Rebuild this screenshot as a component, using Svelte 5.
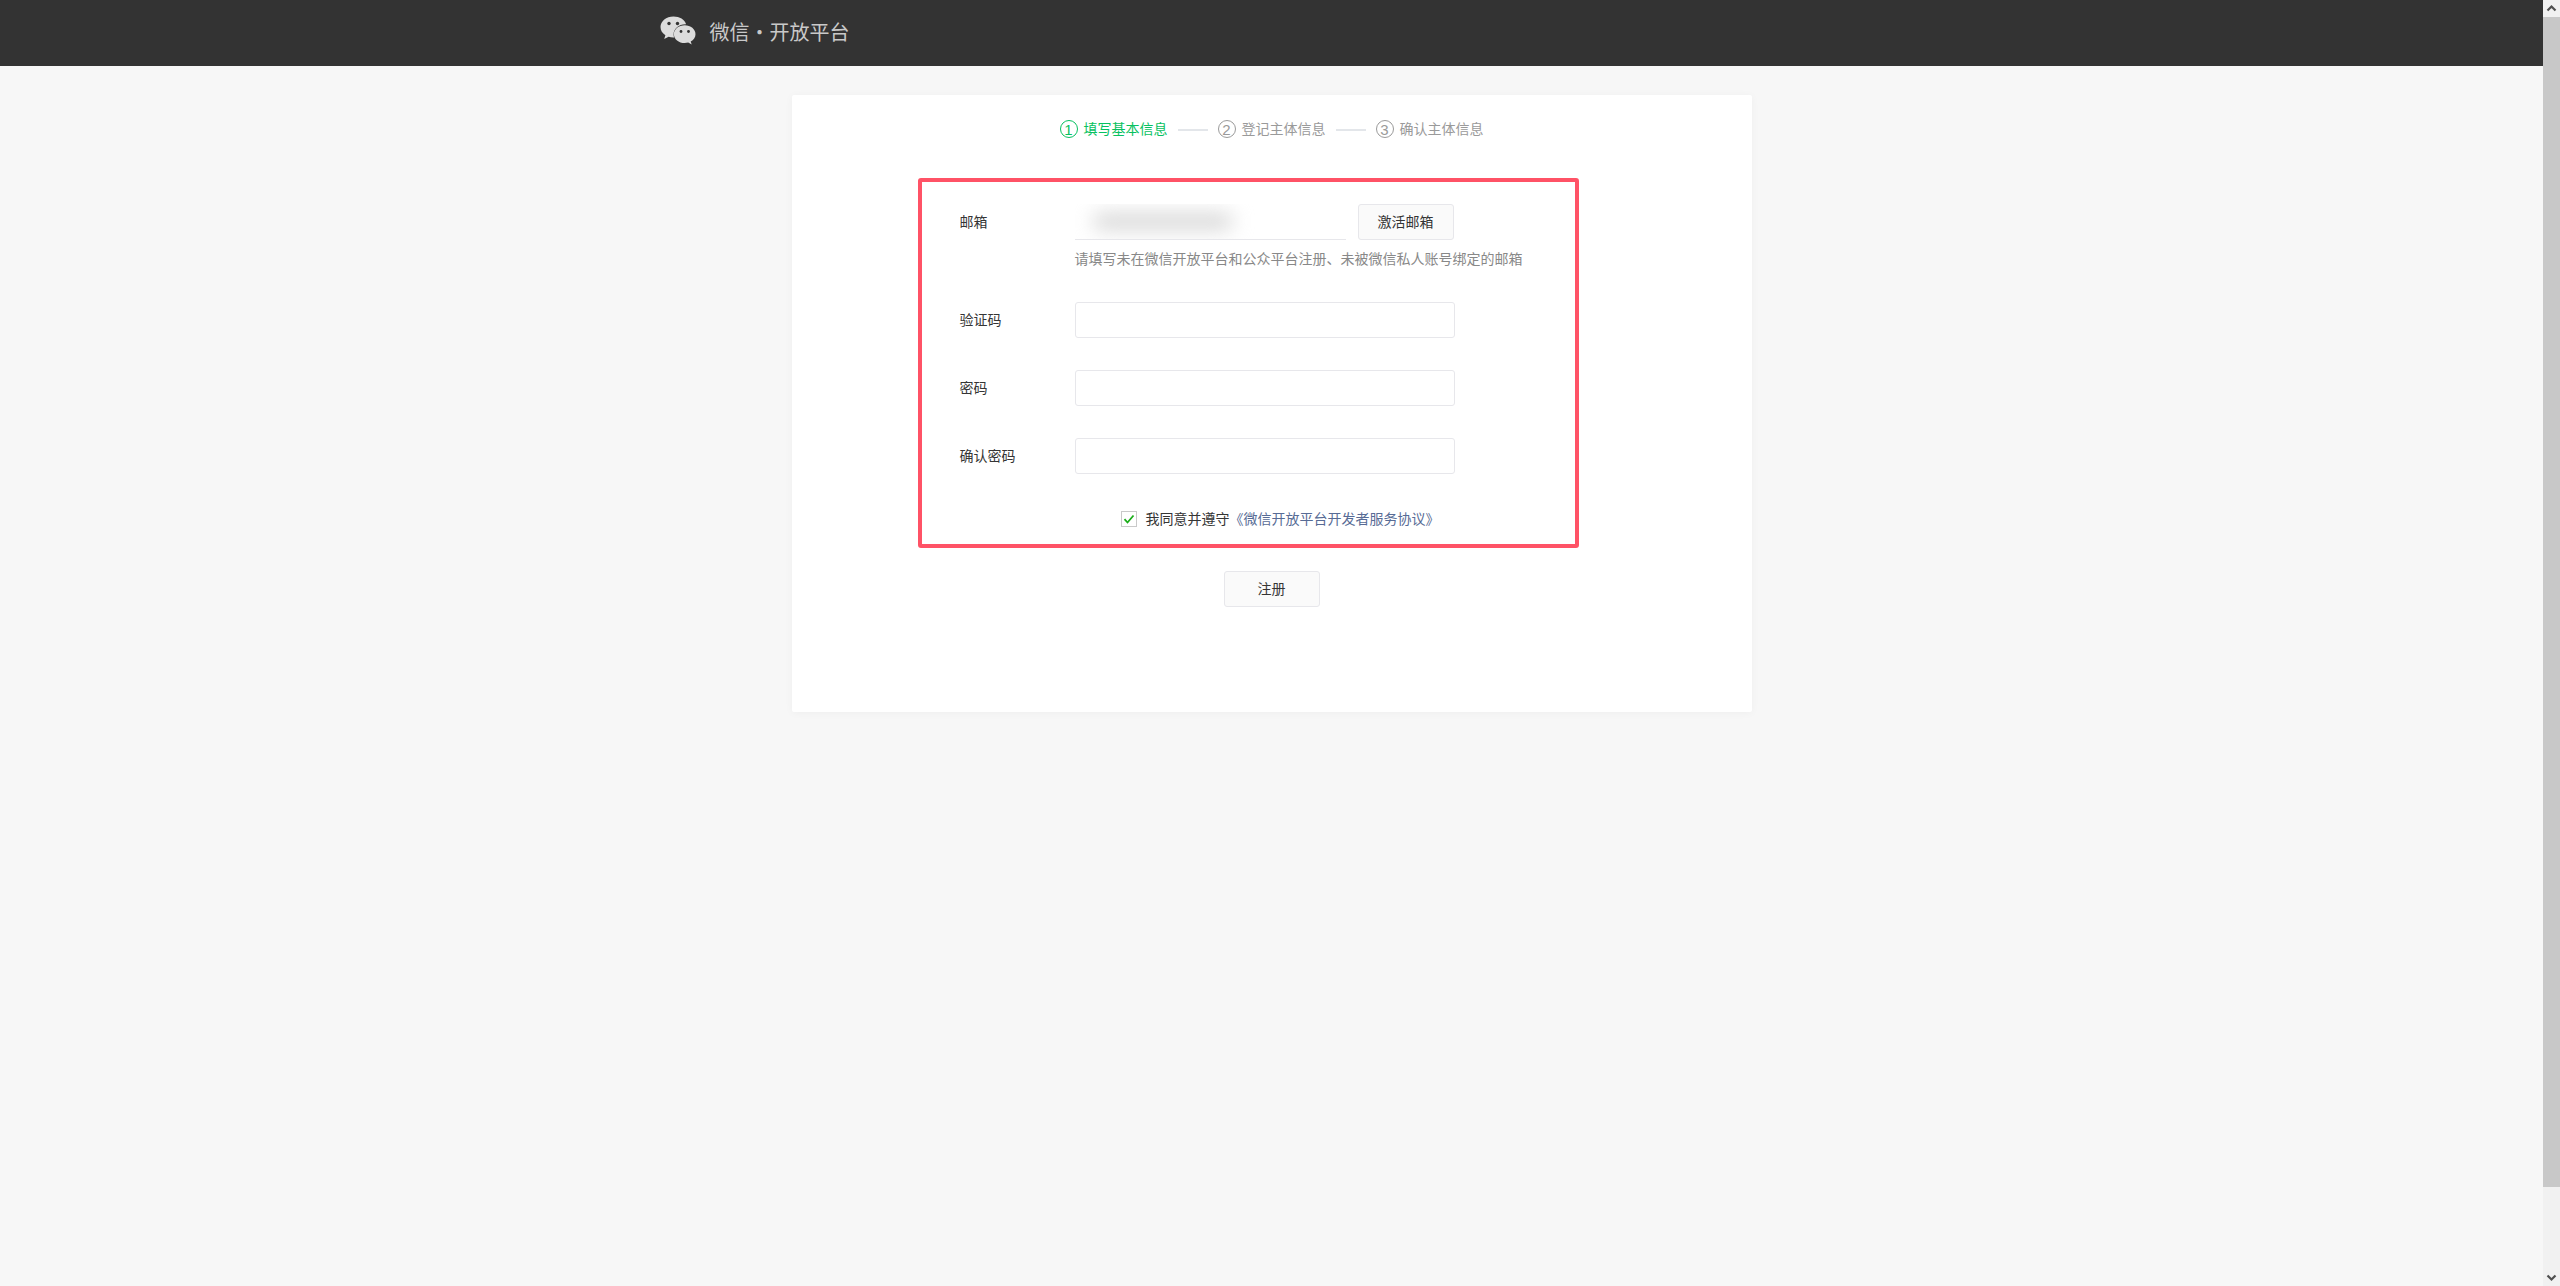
<script lang="ts">
  const steps = [
    { num: 1, label: '填写基本信息', active: true },
    { num: 2, label: '登记主体信息', active: false },
    { num: 3, label: '确认主体信息', active: false }
  ];
  const fields = ['验证码', '密码', '确认密码'];
</script>

<div class="page">
  <div class="main">
    <header class="topbar">
      <div class="topbar-inner">
        <svg class="logo" viewBox="0 0 36 30" width="36" height="30" aria-hidden="true">
          <path class="bubble" d="M13.5 0.5C6.3 0.5 0.5 5.2 0.5 11c0 3.4 1.9 6.3 4.9 8.2L4.2 23l4.4-2.3c1.5.4 3 .7 4.6.7h.9c-.3-1-.5-2-.5-3 0-5.700 5.200-10.200 11.700-10.200h.8C24.700 3.600 19.600.5 13.500.5z" />
          <path class="bubble" d="M35.500 18.200c0-4.900-4.800-8.900-10.800-8.900s-10.800 4-10.800 8.900 4.800 8.900 10.800 8.900c1.200 0 2.400-.2 3.500-.5l3.500 2-1-3.100c2.900-1.700 4.800-4.200 4.800-7.300z" />
          <circle cx="9" cy="7.500" r="1.700" fill="#333" />
          <circle cx="17.500" cy="7.500" r="1.700" fill="#333" />
          <circle cx="21" cy="15.500" r="1.400" fill="#333" />
          <circle cx="28.500" cy="15.500" r="1.400" fill="#333" />
        </svg>
        <span class="brand">微信・开放平台</span>
      </div>
    </header>

    <section class="card">
      <ol class="steps">
        {#each steps as step, i}
          {#if i > 0}<li class="dash"></li>{/if}
          <li class="step" class:active={step.active}>
            <span class="num">{step.num}</span>
            <span class="step-label">{step.label}</span>
          </li>
        {/each}
      </ol>

      <form class="form" onsubmit={(e) => e.preventDefault()}>
        <div class="highlight"></div>

        <div class="row email-row">
          <span class="label">邮箱</span>
          <div class="email-value"><span class="blur"></span></div>
          <button type="button" class="btn">激活邮箱</button>
        </div>
        <p class="hint">请填写未在微信开放平台和公众平台注册、未被微信私人账号绑定的邮箱</p>

        {#each fields as field}
          <div class="row field-row">
            <span class="label">{field}</span>
            <input class="input" type="text" aria-label={field} />
          </div>
        {/each}

        <div class="agree">
          <span class="check">
            <svg viewBox="0 0 14 14" width="14" height="14" aria-hidden="true">
              <path d="M2.500 7.200l3 3.300 6-7" fill="none" stroke="#1aad19" stroke-width="1.800" />
            </svg>
          </span>
          <span class="agree-text">我同意并遵守</span>
          <a href="#agreement" class="link">《微信开放平台开发者服务协议》</a>
        </div>

        <div class="submit">
          <button type="submit" class="btn">注册</button>
        </div>
      </form>
    </section>
  </div>

  <div class="scrollbar">
    <div class="arrow">
      <svg viewBox="0 0 17 17" width="17" height="17" aria-hidden="true"><path d="M4.500 10.500l4-4 4 4" fill="none" stroke="#505050" stroke-width="2.200" /></svg>
    </div>
    <div class="track"><div class="thumb"></div></div>
    <div class="arrow">
      <svg viewBox="0 0 17 17" width="17" height="17" aria-hidden="true"><path d="M4.500 6.500l4 4 4-4" fill="none" stroke="#505050" stroke-width="2.200" /></svg>
    </div>
  </div>
</div>

<style>
  :global(body) {
    margin: 0;
    font-family: "Noto Sans CJK SC", "Liberation Sans", sans-serif;
    font-size: 14px;
    color: #353535;
    background: #f7f7f7;
  }

  .page {
    display: flex;
    height: 1286px;
    overflow: hidden;
  }

  .main {
    flex: 1;
    min-width: 0;
  }

  .topbar {
    height: 66px;
    background: #333;
  }

  .topbar-inner {
    width: 1224px;
    height: 64px;
    margin: 0 auto;
    display: flex;
    align-items: center;
    gap: 14px;
  }

  .logo {
    flex: none;
    margin-top: -2px;
  }

  .bubble {
    fill: #dcdcdc;
  }

  .brand {
    font-size: 20px;
    color: #c9c9c9;
    line-height: 1;
  }

  .card {
    width: 960px;
    height: 617px;
    margin: 29px auto 0;
    background: #fff;
    box-shadow: 0 1px 8px rgba(0, 0, 0, 0.04);
    border-radius: 2px;
    box-sizing: border-box;
    padding-top: 22px;
  }

  .steps {
    list-style: none;
    margin: 0;
    padding: 0 0 0 268px;
    height: 24px;
    display: flex;
    align-items: center;
    color: #9a9a9a;
  }

  .step {
    display: flex;
    align-items: center;
    gap: 6px;
    white-space: nowrap;
  }

  .step.active {
    color: #07c160;
  }

  .step-label {
    margin-bottom: 2px;
  }

  .num {
    width: 16px;
    height: 16px;
    border: 1px solid currentColor;
    border-radius: 50%;
    display: flex;
    align-items: center;
    justify-content: center;
    font-size: 15px;
    line-height: 1;
    font-family: "Liberation Sans", sans-serif;
  }

  .dash {
    width: 30px;
    height: 2px;
    margin: 2px 10px 0;
    background: #e3e6ea;
  }

  .form {
    position: relative;
    margin-top: 39px;
    padding-left: 168px;
  }

  .highlight {
    position: absolute;
    left: 126px;
    top: -2px;
    width: 661px;
    height: 370px;
    box-sizing: border-box;
    border: 4px solid #ff5266;
    border-radius: 3px;
    pointer-events: none;
  }

  .row {
    display: flex;
    align-items: center;
    height: 36px;
  }

  .label {
    width: 115px;
    flex: none;
    margin-bottom: 2px;
    color: #353535;
  }

  .email-row {
    padding-top: 24px;
  }

  .email-value {
    position: relative;
    width: 271px;
    height: 35px;
    border-bottom: 1px solid #e7e7eb;
    overflow: hidden;
    margin-right: 12px;
  }

  .blur {
    position: absolute;
    left: 18px;
    top: 10px;
    width: 140px;
    height: 15px;
    border-radius: 8px;
    background: #d2d2d2;
    filter: blur(10px);
  }

  .btn {
    width: 96px;
    height: 36px;
    padding: 0 0 2px;
    font: inherit;
    color: #353535;
    background: #fafafa;
    border: 1px solid #e7e7eb;
    border-radius: 3px;
  }

  .hint {
    margin: 6px 0 0 115px;
    line-height: 24px;
    color: #888;
    white-space: nowrap;
  }

  .field-row {
    margin-top: 32px;
  }

  .input {
    width: 380px;
    height: 36px;
    box-sizing: border-box;
    border: 1px solid #e7e7eb;
    border-radius: 3px;
    background: #fff;
    padding: 0 10px;
    font: inherit;
    outline: none;
  }

  .agree {
    display: flex;
    align-items: center;
    height: 24px;
    margin-top: 33px;
    margin-left: 161px;
    white-space: nowrap;
  }

  .check {
    width: 16px;
    height: 16px;
    box-sizing: border-box;
    border: 1px solid #c9c9c9;
    display: flex;
    align-items: center;
    justify-content: center;
    margin-right: 9px;
  }

  .agree-text,
  .link {
    margin-bottom: 2px;
  }

  .link {
    color: #576b95;
    text-decoration: none;
  }

  .submit {
    margin-top: 40px;
    padding-left: 264px;
  }

  .scrollbar {
    width: 17px;
    flex: none;
    display: flex;
    flex-direction: column;
    background: #f1f1f1;
  }

  .arrow {
    height: 17px;
    flex: none;
  }

  .arrow svg {
    display: block;
  }

  .track {
    flex: 1;
  }

  .thumb {
    height: 1170px;
    background: #c8c8c8;
  }
</style>
